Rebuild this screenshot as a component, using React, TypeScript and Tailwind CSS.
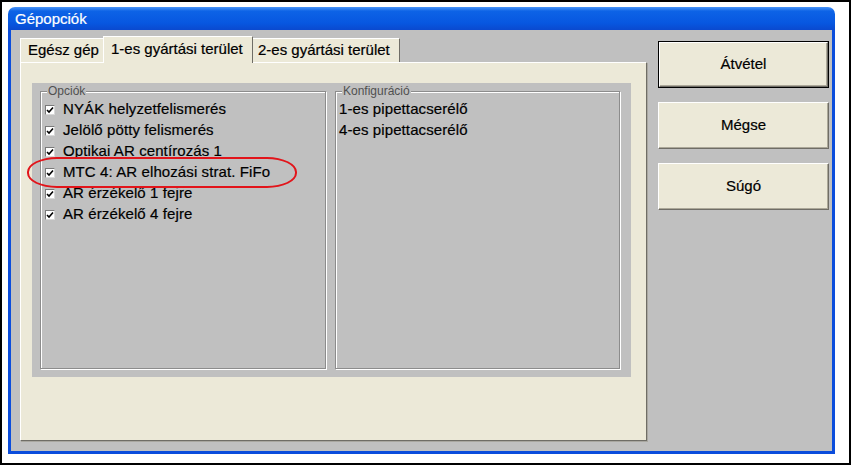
import React from 'react';

const options = [
  "NYÁK helyzetfelismerés",
  "Jelölő pötty felismerés",
  "Optikai AR centírozás 1",
  "MTC 4: AR elhozási strat. FiFo",
  "AR érzékelő 1 fejre",
  "AR érzékelő 4 fejre",
];

const config = ["1-es pipettacserélő", "4-es pipettacserélő"];

const CheckBox: React.FC = () => (
  <span className="w-[10px] h-[10px] bg-white border border-t-[#7a7a7a] border-l-[#7a7a7a] border-r-[#d8d8d8] border-b-[#d8d8d8] flex items-center justify-center shrink-0">
    <svg width="8" height="8" viewBox="0 0 8 8">
      <path d="M1 4 L3 6 L7 1.5" fill="none" stroke="#000" strokeWidth="1.6" />
    </svg>
  </span>
);

const GroupBox: React.FC<{ label: string; children: React.ReactNode; w: string }> = ({ label, children, w }) => (
  <div className={`relative ${w} h-[278px] border border-[#8c8c8c] shadow-[inset_1px_1px_0_#fff,1px_1px_0_#fff]`}>
    <span className="absolute left-[6px] top-[-9px] px-[1px] bg-[#c0c0c0] text-[12px] leading-[16px] text-[#505050] [-webkit-text-stroke:0px]">
      {label}
    </span>
    <div className="flex flex-col pt-[7px]">{children}</div>
  </div>
);

const Button: React.FC<{ label: string; primary?: boolean }> = ({ label, primary }) => (
  <div className={`h-[47px] w-[171px] ${primary ? 'border border-black' : ''}`}>
    <div className="h-full w-full bg-[#ece9d8] border border-t-white border-l-white border-r-[#6f6d66] border-b-[#6f6d66] shadow-[inset_-1px_-1px_0_#aca899] flex items-center justify-center text-[15px] text-black">
      {label}
    </div>
  </div>
);

export default function App() {
  return (
    <div className="relative w-[851px] h-[465px] bg-white border-2 border-black pl-[6px] pt-[5px] font-['Liberation_Sans',Arial,sans-serif] [-webkit-text-stroke:0.2px]">
      <div className="w-[827px] h-[447px] flex flex-col rounded-t-[7px] overflow-hidden">
        {/* title bar */}
        <div className="h-[23px] shrink-0 flex items-center pl-[7px] pt-[1px] text-white text-[15px] bg-[linear-gradient(to_bottom,#4a95f8_0%,#0d63e6_18%,#0757e0_70%,#0a49cf_100%)]">
          Gépopciók
        </div>

        {/* body */}
        <div className="flex-1 flex bg-[#c0c0c0] border-[3px] border-t-0 border-[#0b4ddc]">
          <div className="pl-[9px] pt-[8px] flex flex-col">
            {/* tabs */}
            <div className="flex items-end h-[24px]">
              <div className="h-[24px] w-[83px] pl-[7px] flex items-center bg-[#ece9d8] border-l border-t border-white text-[15px] text-black">
                Egész gép
              </div>
              <div className="relative z-10 h-[27px] -mb-px w-[150px] pl-[7px] pb-[2px] flex items-center bg-[#ece9d8] border-l border-t border-r border-white border-r-[#6f6d66] text-[15px] text-black">
                1-es gyártási terület
              </div>
              <div className="h-[24px] w-[147px] pl-[5px] flex items-center bg-[#ece9d8] border-t border-white border-r border-r-[#6f6d66] text-[15px] text-black">
                2-es gyártási terület
              </div>
            </div>

            {/* panel */}
            <div className="w-[627px] h-[379px] bg-[#ece9d8] border-l border-t border-white border-r border-b border-r-[#6f6d66] border-b-[#6f6d66] shadow-[1px_1px_0_#a9a7a0] pl-[11px] pt-[20px]">
              <div className="w-[599px] h-[294px] bg-[#c0c0c0] p-[8px] flex gap-[9px]">
                <GroupBox label="Opciók" w="w-[286px]">
                  {options.map((o) => (
                    <div key={o} className="h-[21px] flex items-center pl-[4px] gap-[8px] text-[15px] text-black tracking-[0.1px]">
                      <CheckBox />
                      <span>{o}</span>
                    </div>
                  ))}
                </GroupBox>
                <GroupBox label="Konfiguráció" w="w-[285px]">
                  {config.map((c) => (
                    <div key={c} className="h-[21px] flex items-center pl-[3px] text-[15px] text-black tracking-[0.1px]">
                      {c}
                    </div>
                  ))}
                </GroupBox>
              </div>
            </div>
          </div>

          {/* buttons */}
          <div className="ml-[11px] pt-[11px] flex flex-col gap-[14px]">
            <Button label="Átvétel" primary />
            <Button label="Mégse" />
            <Button label="Súgó" />
          </div>
        </div>
      </div>

      {/* red highlight annotation */}
      <div className="absolute left-[25px] top-[155px] w-[270px] h-[31px] border-2 border-[#e2141a] rounded-[30px/15px]" />
    </div>
  );
}
